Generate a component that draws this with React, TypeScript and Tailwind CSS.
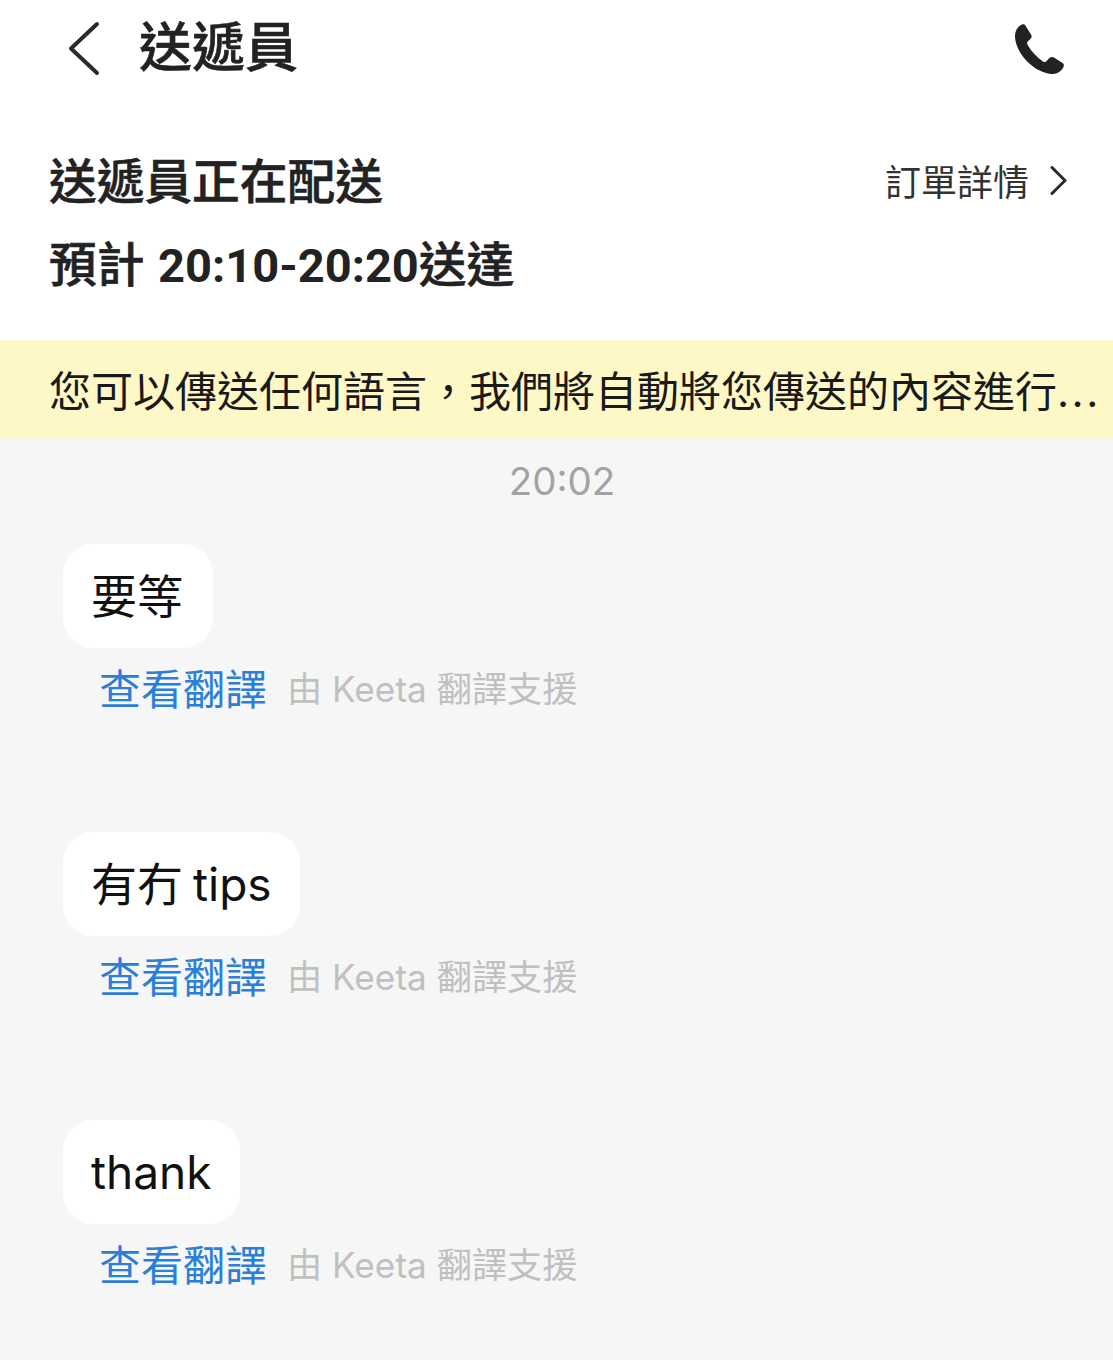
const CJK = "font-['Inter','Noto_Sans_CJK_TC',sans-serif]";

const MESSAGES = ["要等", "有冇 tips", "thank"];

function Bubble({ text }: { text: string }) {
  return (
    <div className="mb-[119px] flex flex-col items-start">
      <div className="flex h-[104px] min-w-[150px] items-center rounded-[30px] bg-white px-[28px] text-[46px] leading-none text-[#111111] [word-spacing:-3px]">
        {text}
      </div>
      <div className="mt-[19px] flex h-[46px] items-center pl-[36px]">
        <span className="text-[42px] leading-none text-[#2b7fd6]">查看翻譯</span>
        <span className="ml-[20px] text-[35.2px] leading-none text-[#c0c0c0]">由 Keeta 翻譯支援</span>
      </div>
    </div>
  );
}

export default function App() {
  return (
    <div className={`${CJK} h-[1360px] w-[1113px] overflow-hidden bg-[#f6f6f6]`}>
      <div className="bg-white">
        <div className="flex h-[96px] items-center justify-between pl-[66px] pr-[47px]">
          <div className="flex items-center">
            <svg width="36" height="56" viewBox="0 0 36 56" fill="none" className="mt-[2px]">
              <path d="M31 3 L5 27.5 L31 52" stroke="#2a2a2a" strokeWidth="4" strokeLinecap="round" strokeLinejoin="round" />
            </svg>
            <span className="ml-[37px] text-[53px] font-medium leading-none text-[#222222] [-webkit-text-stroke:0.6px_#222222]">送遞員</span>
          </div>
          <svg width="52" height="52" viewBox="0 0 52 52" className="mt-[4px]">
            <path
              d="M8 0.6 C9.5 0 10.5 0.4 11.5 1.8 L17 10.5 C18 12 17.8 13.5 16.5 14.8 L13.2 18 C13 19 13.2 20 14 21.5 C17.5 27.5 22.5 33 29 37.5 C30 38.2 31 38.2 32 37.4 L35.5 34 C36.8 32.8 38.3 32.6 40 33.6 L48.5 39 C50 40 50.2 41.5 49.5 43 C47.5 47.5 42.5 50.5 37 50 C20 48 2 30 1 13 C0.7 7.5 3.5 2.5 8 0.6 Z"
              fill="#222222"
            />
          </svg>
        </div>
        <div className="flex items-start justify-between pb-[33px] pl-[49px] pr-[46px] pt-[45px]">
          <div>
            <div className="text-[47.7px] font-medium leading-[83px] text-[#222222] [-webkit-text-stroke:0.6px_#222222]">送遞員正在配送</div>
            <div className="text-[47.7px] font-medium leading-[83px] text-[#222222] [-webkit-text-stroke:0.6px_#222222]">
              預計 <span className="ml-px font-['Roboto'] text-[47px] font-bold [-webkit-text-stroke:0]">20:10-20:20</span>送達
            </div>
          </div>
          <div className="flex h-[83px] items-center">
            <span className="text-[36px] leading-none text-[#333333]">訂單詳情</span>
            <svg width="17" height="29" viewBox="0 0 17 29" fill="none" className="mb-[4px] ml-[21px]">
              <path d="M2 1.5 L15 14.5 L2 27.5" stroke="#2a2a2a" strokeWidth="3" strokeLinecap="round" strokeLinejoin="round" />
            </svg>
          </div>
        </div>
      </div>
      <div className="flex h-[98px] items-center bg-[#fdf8c6] pl-[49px] pt-[6px]">
        <span className="whitespace-nowrap text-[42px] leading-none text-[#1a1a1a]">
          您可以傳送任何語言，我們將自動將您傳送的內容進行<span className="tracking-[2.5px]">...</span>
        </span>
      </div>
      <div className="pl-[11px] pt-[20px] text-center text-[38.5px] leading-[46px] text-[#a3a3a3]">20:02</div>
      <div className="pl-[63px] pt-[40px]">
        {MESSAGES.map((m) => (
          <Bubble key={m} text={m} />
        ))}
      </div>
    </div>
  );
}
